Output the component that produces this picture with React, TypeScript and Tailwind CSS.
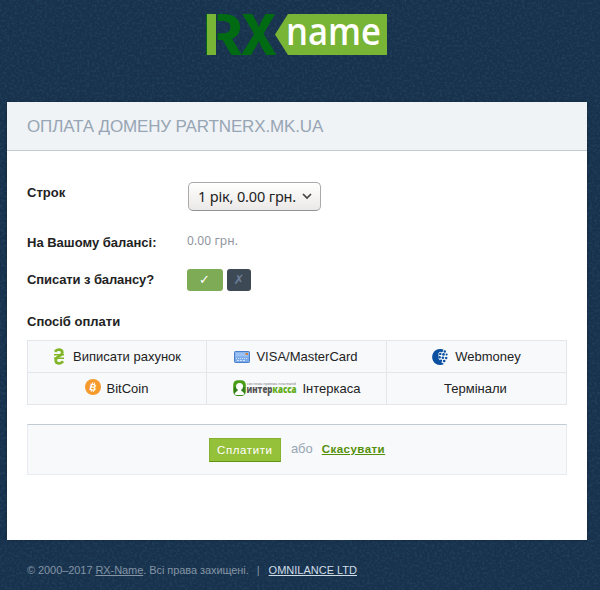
import React from "react";

function Texture() {
  return (
    <svg className="absolute inset-0 h-full w-full opacity-[0.09]" aria-hidden="true">
      <filter id="grain">
        <feTurbulence type="fractalNoise" baseFrequency="0.4" numOctaves="2" seed="4" />
        <feColorMatrix values="0 0 0 0 0.13  0 0 0 0 0.42  0 0 0 0 0.58  0 3.4 0 0 -1.5" />
      </filter>
      <rect width="100%" height="100%" filter="url(#grain)" />
    </svg>
  );
}

function Logo() {
  return (
    <svg className="overflow-visible" width="180" height="41" viewBox="0 0 180 41" role="img" aria-label="RX name">
      <g fill="#006b12" fontFamily="Inter, sans-serif" fontWeight="700" fontSize="56.4">
        <text x="-5" y="41" textLength="41" lengthAdjust="spacingAndGlyphs">R</text>
        <text x="33" y="41" textLength="37.500" lengthAdjust="spacingAndGlyphs" fontWeight="800">X</text>
      </g>
      <rect x="9" width="1.500" height="41" fill="#18324d" />
      <rect width="9" height="41" fill="#78b435" />
      <path d="M81 0h99v41H81L68 20.500z" fill="#78b435" />
      <text x="79" y="31" textLength="95" lengthAdjust="spacingAndGlyphs" fill="#fff" fontFamily="'Open Sans', sans-serif" fontWeight="600" fontSize="37">name</text>
    </svg>
  );
}

function Hryvnia() {
  return (
    <svg width="12" height="17" viewBox="0 0 12 17" fill="none" stroke="#82b527" strokeWidth="2.7">
      <path d="M2 3.700C4 .7 9.300 1 9.300 4.400C9.300 8.300 2.700 8 2.700 12.200C2.700 16.200 8 16.300 10 13.300" />
      <path d="M1 6.800h10M1 10.300h10" strokeWidth="1.600" />
    </svg>
  );
}

function Card() {
  return (
    <svg width="16" height="12" viewBox="0 0 16 12">
      <rect x=".5" y=".5" width="15" height="11" rx=".8" fill="#7dabea" stroke="#4a7fcb" />
      <path d="M1.500 1.500h13v4h-13z" fill="#9cc1f2" />
      <path d="M11.500 2h2.500v2h-2.500z" fill="#d6843b" />
      <path d="M2 7.500h12" stroke="#d5e6fc" strokeDasharray="1 1" />
      <path d="M3 9.500h8" stroke="#d0e3fb" strokeDasharray="2 1" />
    </svg>
  );
}

function Webmoney() {
  return (
    <svg width="17" height="16" viewBox="0 0 17 16">
      <path d="M12 1A8 8 0 1 0 12 15L9 13 6.500 9.500 6.500 4 9 2z" fill="#0b4fa0" />
      <g fill="#0b4fa0">
        <circle cx="9.500" cy="1.800" r="1.500" /><circle cx="12.800" cy="2.500" r="1.200" />
        <circle cx="8.300" cy="4.900" r="1.200" /><circle cx="11.500" cy="5.400" r="1.300" /><circle cx="14.600" cy="5.500" r="1.100" />
        <circle cx="7.700" cy="8.200" r="1.200" /><circle cx="10.900" cy="8.700" r="1.300" /><circle cx="14.200" cy="9" r="1.200" />
        <circle cx="8.900" cy="11.700" r="1.300" /><circle cx="12.200" cy="12" r="1.300" />
      </g>
    </svg>
  );
}

function Bitcoin() {
  return (
    <svg width="16" height="16" viewBox="0 0 16 16">
      <circle cx="8" cy="8" r="8" fill="#f79a2c" />
      <text x="8.200" y="11.500" textAnchor="middle" transform="rotate(12 8 8)" fill="#fff" fontFamily="'Liberation Sans', sans-serif" fontWeight="700" fontSize="9.500">B</text>
      <path d="M7.800 3.300l-.3 1.500M9.700 3.700l-.3 1.500M6.500 11l-.3 1.700M8.500 11.400l-.3 1.600" stroke="#fff" strokeWidth="1" />
    </svg>
  );
}

function Interkassa() {
  return (
    <svg className="overflow-visible" width="64" height="17" viewBox="0 0 64 17">
      <rect x=".2" y=".3" width="12.600" height="15.700" rx="4.500" fill="#4a9d18" />
      <path d="M1 7h10.800v5c0 2-2 3.700-4 3.700H5c-2 0-4-1.700-4-3.700z" fill="#2e7d16" />
      <circle cx="6.500" cy="6.500" r="3.500" fill="#fff" />
      <path d="M1.600 14.200C2.500 11 5 11.700 5.300 9h2.400c.3 2.700 2.800 2 3.700 5.200-2 1.200-7.800 1.200-9.800 0z" fill="#fff" />
      <text x="14" y="5" textLength="49" lengthAdjust="spacingAndGlyphs" fill="#888" fontFamily="'Liberation Sans', sans-serif" fontSize="4.200">система приема платежей</text>
      <g fontFamily="'Open Sans', sans-serif" fontWeight="800" fontSize="10">
        <text x="13.500" y="13" textLength="26" lengthAdjust="spacingAndGlyphs" fill="#555">интер</text>
        <text x="39.500" y="13" textLength="24" lengthAdjust="spacingAndGlyphs" fill="#61ac12">касса</text>
      </g>
    </svg>
  );
}

const methods: { label: string; icon?: React.ReactNode; layout: string }[] = [
  { label: "Виписати рахунок", icon: <Hryvnia />, layout: "gap-[8px]" },
  { label: "VISA/MasterCard", icon: <Card />, layout: "gap-[6px] pr-px" },
  { label: "Webmoney", icon: <Webmoney />, layout: "gap-[6px]" },
  { label: "BitCoin", icon: <span className="-mt-1"><Bitcoin /></span>, layout: "gap-[6px] pr-px" },
  { label: "Інтеркаса", icon: <Interkassa />, layout: "gap-[6px]" },
  { label: "Термінали", layout: "pr-[2px]" },
];

export default function App() {
  return (
    <div className="relative h-[590px] w-[600px] overflow-hidden bg-[#18324d] font-['Liberation_Sans',Arial,sans-serif] text-[13px] leading-[16px] text-[#222]">
      <Texture />
      <div className="relative flex flex-col">
        <header className="flex h-[102px] pt-[14px] pl-[207px]"><Logo /></header>

        <main className="ml-[7px] h-[438px] w-[580px] bg-white shadow-[0_0_3px_rgba(0,0,0,0.25)]">
          <h1 className="flex h-[49px] items-center border-b border-[#c2cad2] bg-[#eff3f6] pt-px pl-5 text-[17px] tracking-[-0.14px] text-[#98a5b4]">
            <span className="whitespace-nowrap">ОПЛАТА ДОМЕНУ PARTNERX.MK.UA</span>
          </h1>
          <div className="px-5">
            <div className="flex h-[81px] pt-[31px]">
              <div className="w-[161px] pt-[3px] font-bold">Строк</div>
              <button className="flex h-[29px] w-[133px] items-center justify-between rounded-[5px] border border-[#aaa] border-b-[#929292] bg-linear-to-b from-white to-[#ebe9e7] pr-[8px] pb-px pl-[9px] font-['Noto_Sans',sans-serif] text-[14.5px] tracking-[-0.15px] text-[#222]">
                <span className="whitespace-nowrap">1 рік, 0.00 грн.</span>
                <svg width="10" height="7" viewBox="0 0 10 7" fill="none" stroke="#444" strokeWidth="1.700"><path d="M1 1l4 4 4-4" /></svg>
              </button>
            </div>
            <div className="flex h-[37px] items-start">
              <div className="w-[160px] pt-[3px] font-bold">На Вашому балансі:</div>
              <div className="pt-px font-['Noto_Sans',sans-serif] text-[12px] tracking-[0.1px] text-[#8f959d]">0.00 грн.</div>
            </div>
            <div className="flex h-[45px] items-start">
              <div className="w-[160px] pt-[3px] font-bold tracking-[-0.1px]">Списати з балансу?</div>
              <div className="flex gap-1 font-['DejaVu_Sans',sans-serif] text-[13px]">
                <button className="h-[22px] w-9 rounded-[3px] bg-[#7eab55] pr-px text-white">✓</button>
                <button className="h-[22px] w-6 rounded-[3px] bg-[#3d4955] text-[#6b7d95]">✗</button>
              </div>
            </div>
            <h2 className="h-[26px] font-bold">Спосіб оплати</h2>
            <div className="grid grid-cols-[179px_180px_180px] border-t border-l border-[#e3e6ea] bg-[#f7f9fb]">
              {methods.map((m) => (
                <div key={m.label} className={`flex h-8 items-center justify-center border-r border-b border-[#e3e6ea] whitespace-nowrap ${m.layout}`}>
                  {m.icon}
                  <span>{m.label}</span>
                </div>
              ))}
            </div>
            <div className="mt-[19px] flex h-[51px] justify-center border border-t-[#c2cad2] border-[#e8ecf0] bg-[#f7f9fb] pt-[13px]">
              <button className="h-6 w-[72px] border border-[#86b230] border-b-[#5f9312] bg-[#95c03a] text-[11.5px] tracking-[0.6px] leading-[20px] text-white">Сплатити</button>
              <span className="ml-[10px] pt-[3px] text-[#98a5b4]">або</span>
              <a href="#" className="ml-[9px] pt-[3px] text-[11.5px] font-bold tracking-[0.45px] text-[#55900a] underline">Скасувати</a>
            </div>
          </div>
        </main>

        <footer className="flex pt-[22px] pl-[27px] text-[11px] whitespace-nowrap text-[#8494a4]">
          <span className="tracking-[-0.07px]">© 2000–2017 <a href="#" className="underline">RX-Name</a>. Всі права захищені.</span>
          <span className="mr-[9px] ml-[8px]">|</span>
          <a href="#" className="text-[#d0dce6] underline">OMNILANCE LTD</a>
        </footer>
      </div>
    </div>
  );
}
